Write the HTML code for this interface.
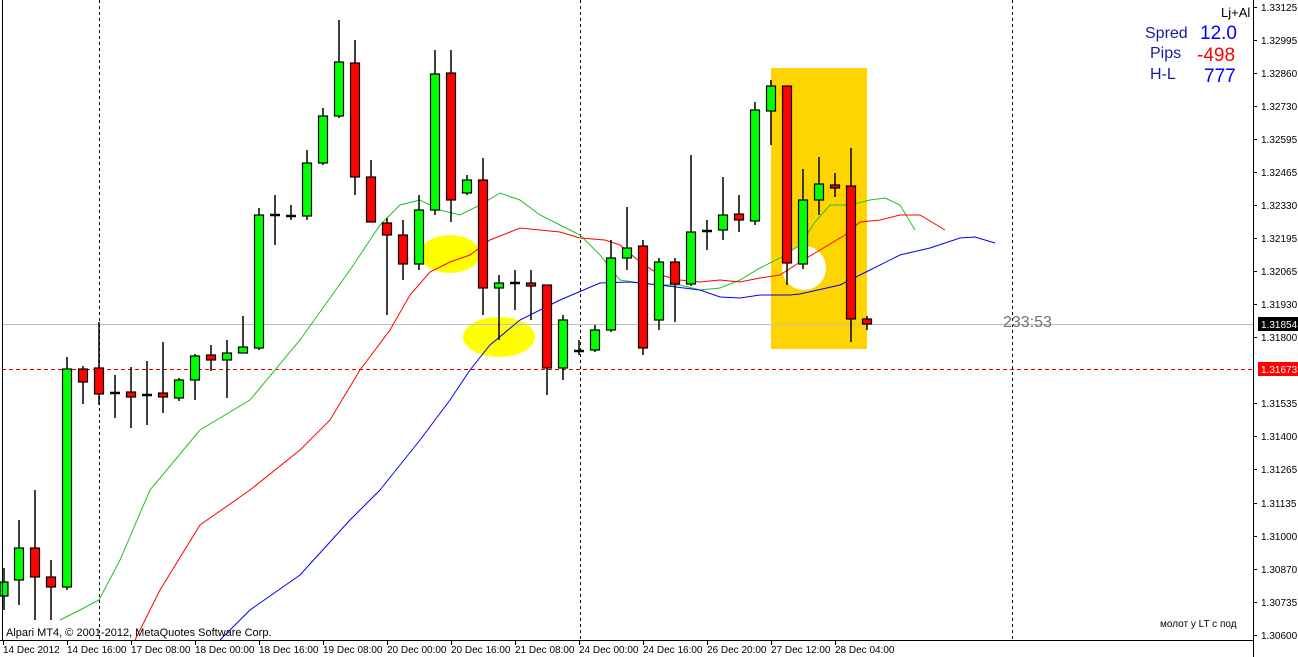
<!DOCTYPE html>
<html><head><meta charset="utf-8"><style>
html,body{margin:0;padding:0;background:#fff;}
svg{display:block;font-family:"Liberation Sans",sans-serif;}
</style></head><body>
<svg width="1298" height="657" viewBox="0 0 1298 657" xmlns="http://www.w3.org/2000/svg">
<rect width="1298" height="657" fill="#fff"/>
<rect x="771" y="68" width="96" height="281" fill="#FFD500"/>
<circle cx="804" cy="268" r="22" fill="#fff"/>
<ellipse cx="450" cy="254" rx="30" ry="19" fill="#ffff00"/>
<ellipse cx="499" cy="337" rx="36" ry="20" fill="#ffff00"/>
<g stroke="#000" stroke-width="1" stroke-dasharray="3,3" shape-rendering="crispEdges">
<line x1="99.5" y1="0" x2="99.5" y2="640"/>
<line x1="580.5" y1="0" x2="580.5" y2="640"/>
<line x1="1012.5" y1="0" x2="1012.5" y2="640"/>
</g>
<line x1="2" y1="369.5" x2="1253" y2="369.5" stroke="#e00000" stroke-dasharray="4,3" shape-rendering="crispEdges"/>
<line x1="2" y1="324.5" x2="1253" y2="324.5" stroke="#c0c0c0" shape-rendering="crispEdges"/>
<g fill="none" stroke-width="1">
<polyline stroke="#22c022" points="60,620 80,610 99,600 120,560 150,490 200,430 250,400 300,340 350,270 380,225 400,205 420,200 440,210 460,215 480,205 500,193 520,200 540,215 560,225 580,235 600,255 620,280 640,283 660,285 680,285 700,290 720,288 740,280 760,268 780,258 800,245 815,222 830,205 850,205 870,200 885,198 900,205 915,230"/>
<polyline stroke="#f00" points="135,640 160,590 200,525 250,490 300,450 330,420 360,370 390,330 410,295 430,272 450,262 470,255 490,240 520,228 540,230 560,232 580,238 605,240 620,245 640,262 660,275 680,280 700,282 720,280 740,282 760,278 780,275 800,262 820,250 845,235 860,222 880,220 900,215 920,215 945,230"/>
<polyline stroke="#0000ee" points="220,640 250,610 300,575 350,520 380,490 420,440 450,400 470,370 490,345 520,320 560,300 600,283 630,282 660,285 700,290 720,297 740,298 760,295 790,295 800,294 840,285 870,270 900,255 930,248 960,238 975,237 995,243"/>
</g>
<g stroke="#000" stroke-width="1.5">
<line x1="4" y1="568" x2="4" y2="610"/><line x1="19" y1="520" x2="19" y2="605"/><line x1="35" y1="490" x2="35" y2="620"/><line x1="51" y1="560" x2="51" y2="620"/><line x1="67" y1="357" x2="67" y2="590"/><line x1="83" y1="366" x2="83" y2="404"/><line x1="99" y1="322" x2="99" y2="405"/><line x1="115" y1="375" x2="115" y2="418"/><line x1="131" y1="367" x2="131" y2="428"/><line x1="147" y1="361" x2="147" y2="425"/><line x1="163" y1="342" x2="163" y2="413"/><line x1="179" y1="378" x2="179" y2="401"/><line x1="195" y1="354" x2="195" y2="400"/><line x1="211" y1="345" x2="211" y2="371"/><line x1="227" y1="340" x2="227" y2="398"/><line x1="243" y1="316" x2="243" y2="350"/><line x1="259" y1="208" x2="259" y2="350"/><line x1="275" y1="195" x2="275" y2="245"/><line x1="291" y1="205" x2="291" y2="220"/><line x1="307" y1="150" x2="307" y2="220"/><line x1="323" y1="108" x2="323" y2="165"/><line x1="339" y1="20" x2="339" y2="118"/><line x1="355" y1="40" x2="355" y2="195"/><line x1="371" y1="160" x2="371" y2="222"/><line x1="387" y1="218" x2="387" y2="315"/><line x1="403" y1="220" x2="403" y2="280"/><line x1="419" y1="195" x2="419" y2="270"/><line x1="435" y1="50" x2="435" y2="215"/><line x1="451" y1="50" x2="451" y2="222"/><line x1="467" y1="175" x2="467" y2="195"/><line x1="483" y1="158" x2="483" y2="315"/><line x1="499" y1="275" x2="499" y2="340"/><line x1="515" y1="270" x2="515" y2="310"/><line x1="531" y1="270" x2="531" y2="320"/><line x1="547" y1="285" x2="547" y2="395"/><line x1="563" y1="315" x2="563" y2="380"/><line x1="579" y1="340" x2="579" y2="355"/><line x1="595" y1="325" x2="595" y2="352"/><line x1="611" y1="240" x2="611" y2="332"/><line x1="627" y1="207" x2="627" y2="270"/><line x1="643" y1="240" x2="643" y2="355"/><line x1="659" y1="258" x2="659" y2="330"/><line x1="675" y1="258" x2="675" y2="322"/><line x1="691" y1="155" x2="691" y2="286"/><line x1="707" y1="220" x2="707" y2="250"/><line x1="723" y1="177" x2="723" y2="240"/><line x1="739" y1="195" x2="739" y2="232"/><line x1="755" y1="102" x2="755" y2="225"/><line x1="771" y1="80" x2="771" y2="145"/><line x1="787" y1="86" x2="787" y2="285"/><line x1="803" y1="169" x2="803" y2="269"/><line x1="819" y1="157" x2="819" y2="215"/><line x1="835" y1="173" x2="835" y2="197"/><line x1="851" y1="148" x2="851" y2="342"/><line x1="867" y1="316" x2="867" y2="330"/>
</g>
<g stroke="#000" stroke-width="1.2">
<rect x="0" y="582" width="8" height="14" fill="#00ff00"/>
<rect x="14.5" y="548" width="9" height="32" fill="#00ff00"/>
<rect x="30.5" y="548" width="9" height="29" fill="#ff0000"/>
<rect x="46.5" y="577" width="9" height="10" fill="#ff0000"/>
<rect x="62.5" y="369" width="9" height="218" fill="#00ff00"/>
<rect x="78.5" y="369" width="9" height="13" fill="#ff0000"/>
<rect x="94.5" y="368" width="9" height="26" fill="#ff0000"/>
<rect x="126.5" y="392" width="9" height="5" fill="#ff0000"/>
<rect x="158.5" y="393" width="9" height="4" fill="#ff0000"/>
<rect x="174.5" y="380" width="9" height="18" fill="#00ff00"/>
<rect x="190.5" y="356" width="9" height="24" fill="#00ff00"/>
<rect x="206.5" y="355" width="9" height="5" fill="#ff0000"/>
<rect x="222.5" y="353" width="9" height="7" fill="#00ff00"/>
<rect x="238.5" y="347" width="9" height="6" fill="#00ff00"/>
<rect x="254.5" y="215" width="9" height="133" fill="#00ff00"/>
<rect x="302.5" y="163" width="9" height="53" fill="#00ff00"/>
<rect x="318.5" y="116" width="9" height="47" fill="#00ff00"/>
<rect x="334.5" y="62" width="9" height="54" fill="#00ff00"/>
<rect x="350.5" y="63" width="9" height="114" fill="#ff0000"/>
<rect x="366.5" y="177" width="9" height="45" fill="#ff0000"/>
<rect x="382.5" y="223" width="9" height="12" fill="#ff0000"/>
<rect x="398.5" y="235" width="9" height="29" fill="#ff0000"/>
<rect x="414.5" y="210" width="9" height="54" fill="#00ff00"/>
<rect x="430.5" y="74" width="9" height="136" fill="#00ff00"/>
<rect x="446.5" y="73" width="9" height="127" fill="#ff0000"/>
<rect x="462.5" y="180" width="9" height="13" fill="#00ff00"/>
<rect x="478.5" y="180" width="9" height="108" fill="#ff0000"/>
<rect x="494.5" y="283" width="9" height="5" fill="#00ff00"/>
<rect x="526.5" y="283" width="9" height="3" fill="#ff0000"/>
<rect x="542.5" y="285" width="9" height="83" fill="#ff0000"/>
<rect x="558.5" y="320" width="9" height="48" fill="#00ff00"/>
<rect x="590.5" y="330" width="9" height="20" fill="#00ff00"/>
<rect x="606.5" y="258" width="9" height="72" fill="#00ff00"/>
<rect x="622.5" y="248" width="9" height="10" fill="#00ff00"/>
<rect x="638.5" y="246" width="9" height="102" fill="#ff0000"/>
<rect x="654.5" y="262" width="9" height="58" fill="#00ff00"/>
<rect x="670.5" y="262" width="9" height="22" fill="#ff0000"/>
<rect x="686.5" y="232" width="9" height="52" fill="#00ff00"/>
<rect x="718.5" y="215" width="9" height="15" fill="#00ff00"/>
<rect x="734.5" y="214" width="9" height="6" fill="#ff0000"/>
<rect x="750.5" y="110" width="9" height="111" fill="#00ff00"/>
<rect x="766.5" y="86" width="9" height="25" fill="#00ff00"/>
<rect x="782.5" y="86" width="9" height="177" fill="#ff0000"/>
<rect x="798.5" y="200" width="9" height="64" fill="#00ff00"/>
<rect x="814.5" y="184" width="9" height="16" fill="#00ff00"/>
<rect x="830.5" y="185" width="9" height="3" fill="#ff0000"/>
<rect x="846.5" y="186" width="9" height="133" fill="#ff0000"/>
<rect x="862.5" y="319" width="9" height="5" fill="#ff0000"/>
</g>
<g stroke="#000" stroke-width="2.5">
<line x1="110" y1="393" x2="120" y2="393"/><line x1="142" y1="395" x2="152" y2="395"/><line x1="270" y1="215" x2="280" y2="215"/><line x1="286" y1="216" x2="296" y2="216"/><line x1="510" y1="283" x2="520" y2="283"/><line x1="574" y1="351" x2="584" y2="351"/><line x1="702" y1="231" x2="712" y2="231"/>
</g>
<line x1="2.5" y1="0" x2="2.5" y2="640" stroke="#000"/>
<line x1="1253.5" y1="0" x2="1253.5" y2="657" stroke="#000"/>
<line x1="0" y1="640.5" x2="1254" y2="640.5" stroke="#000"/>
<g font-size="10" fill="#000">
<g stroke="#000"><line x1="1253" y1="7.5" x2="1257" y2="7.5"/><line x1="1253" y1="40.5" x2="1257" y2="40.5"/><line x1="1253" y1="73.5" x2="1257" y2="73.5"/><line x1="1253" y1="106.5" x2="1257" y2="106.5"/><line x1="1253" y1="139.5" x2="1257" y2="139.5"/><line x1="1253" y1="172.5" x2="1257" y2="172.5"/><line x1="1253" y1="205.5" x2="1257" y2="205.5"/><line x1="1253" y1="238.5" x2="1257" y2="238.5"/><line x1="1253" y1="271.5" x2="1257" y2="271.5"/><line x1="1253" y1="304.5" x2="1257" y2="304.5"/><line x1="1253" y1="337.5" x2="1257" y2="337.5"/><line x1="1253" y1="403.5" x2="1257" y2="403.5"/><line x1="1253" y1="436.5" x2="1257" y2="436.5"/><line x1="1253" y1="469.5" x2="1257" y2="469.5"/><line x1="1253" y1="503.5" x2="1257" y2="503.5"/><line x1="1253" y1="536.5" x2="1257" y2="536.5"/><line x1="1253" y1="569.5" x2="1257" y2="569.5"/><line x1="1253" y1="602.5" x2="1257" y2="602.5"/><line x1="1253" y1="635.5" x2="1257" y2="635.5"/></g>
<text x="1261" y="11">1.33125</text><text x="1261" y="44">1.32995</text><text x="1261" y="77">1.32860</text><text x="1261" y="110">1.32730</text><text x="1261" y="143">1.32595</text><text x="1261" y="176">1.32465</text><text x="1261" y="209">1.32330</text><text x="1261" y="242">1.32195</text><text x="1261" y="275">1.32065</text><text x="1261" y="308">1.31930</text><text x="1261" y="341">1.31800</text><text x="1261" y="407">1.31535</text><text x="1261" y="440">1.31400</text><text x="1261" y="473">1.31265</text><text x="1261" y="507">1.31135</text><text x="1261" y="540">1.31000</text><text x="1261" y="573">1.30870</text><text x="1261" y="606">1.30735</text><text x="1261" y="639">1.30600</text>
<rect x="1258" y="317" width="40" height="14" fill="#000"/><text x="1261" y="328" fill="#fff">1.31854</text>
<rect x="1258" y="362" width="40" height="14" fill="#ff0000"/><text x="1261" y="373" fill="#fff">1.31673</text>
</g>
<g stroke="#000"><line x1="3.5" y1="640" x2="3.5" y2="645"/><line x1="67.5" y1="640" x2="67.5" y2="645"/><line x1="131.5" y1="640" x2="131.5" y2="645"/><line x1="195.5" y1="640" x2="195.5" y2="645"/><line x1="259.5" y1="640" x2="259.5" y2="645"/><line x1="323.5" y1="640" x2="323.5" y2="645"/><line x1="387.5" y1="640" x2="387.5" y2="645"/><line x1="451.5" y1="640" x2="451.5" y2="645"/><line x1="515.5" y1="640" x2="515.5" y2="645"/><line x1="579.5" y1="640" x2="579.5" y2="645"/><line x1="643.5" y1="640" x2="643.5" y2="645"/><line x1="707.5" y1="640" x2="707.5" y2="645"/><line x1="771.5" y1="640" x2="771.5" y2="645"/><line x1="835.5" y1="640" x2="835.5" y2="645"/></g>
<g font-size="10" fill="#000">
<text x="3" y="653">14 Dec 2012</text><text x="67" y="653">14 Dec 16:00</text><text x="131" y="653">17 Dec 08:00</text><text x="195" y="653">18 Dec 00:00</text><text x="259" y="653">18 Dec 16:00</text><text x="323" y="653">19 Dec 08:00</text><text x="387" y="653">20 Dec 00:00</text><text x="451" y="653">20 Dec 16:00</text><text x="515" y="653">21 Dec 08:00</text><text x="579" y="653">24 Dec 00:00</text><text x="643" y="653">24 Dec 16:00</text><text x="707" y="653">26 Dec 20:00</text><text x="771" y="653">27 Dec 12:00</text><text x="835" y="653">28 Dec 04:00</text>
</g>
<text x="6" y="636" font-size="11" fill="#000">Alpari MT4, © 2001-2012, MetaQuotes Software Corp.</text>
<text x="1160" y="627" font-size="10" fill="#000">молот у LT с под</text>
<text x="1003" y="327" font-size="16" fill="#707070">233:53</text>
<text x="1221" y="17" font-size="13" fill="#000">Lj+Al</text>
<text x="1145" y="38" font-size="16" fill="#1a1aa0">Spred</text>
<text x="1150" y="58" font-size="16" fill="#1a1aa0">Pips</text>
<text x="1150" y="79" font-size="16" fill="#1a1aa0">H-L</text>
<text x="1200" y="39" font-size="19" fill="#0000ff">12.0</text>
<text x="1197" y="61" font-size="19" fill="#ff0000">-498</text>
<text x="1204" y="82" font-size="19" fill="#0000ff">777</text>
</svg>
</body></html>
